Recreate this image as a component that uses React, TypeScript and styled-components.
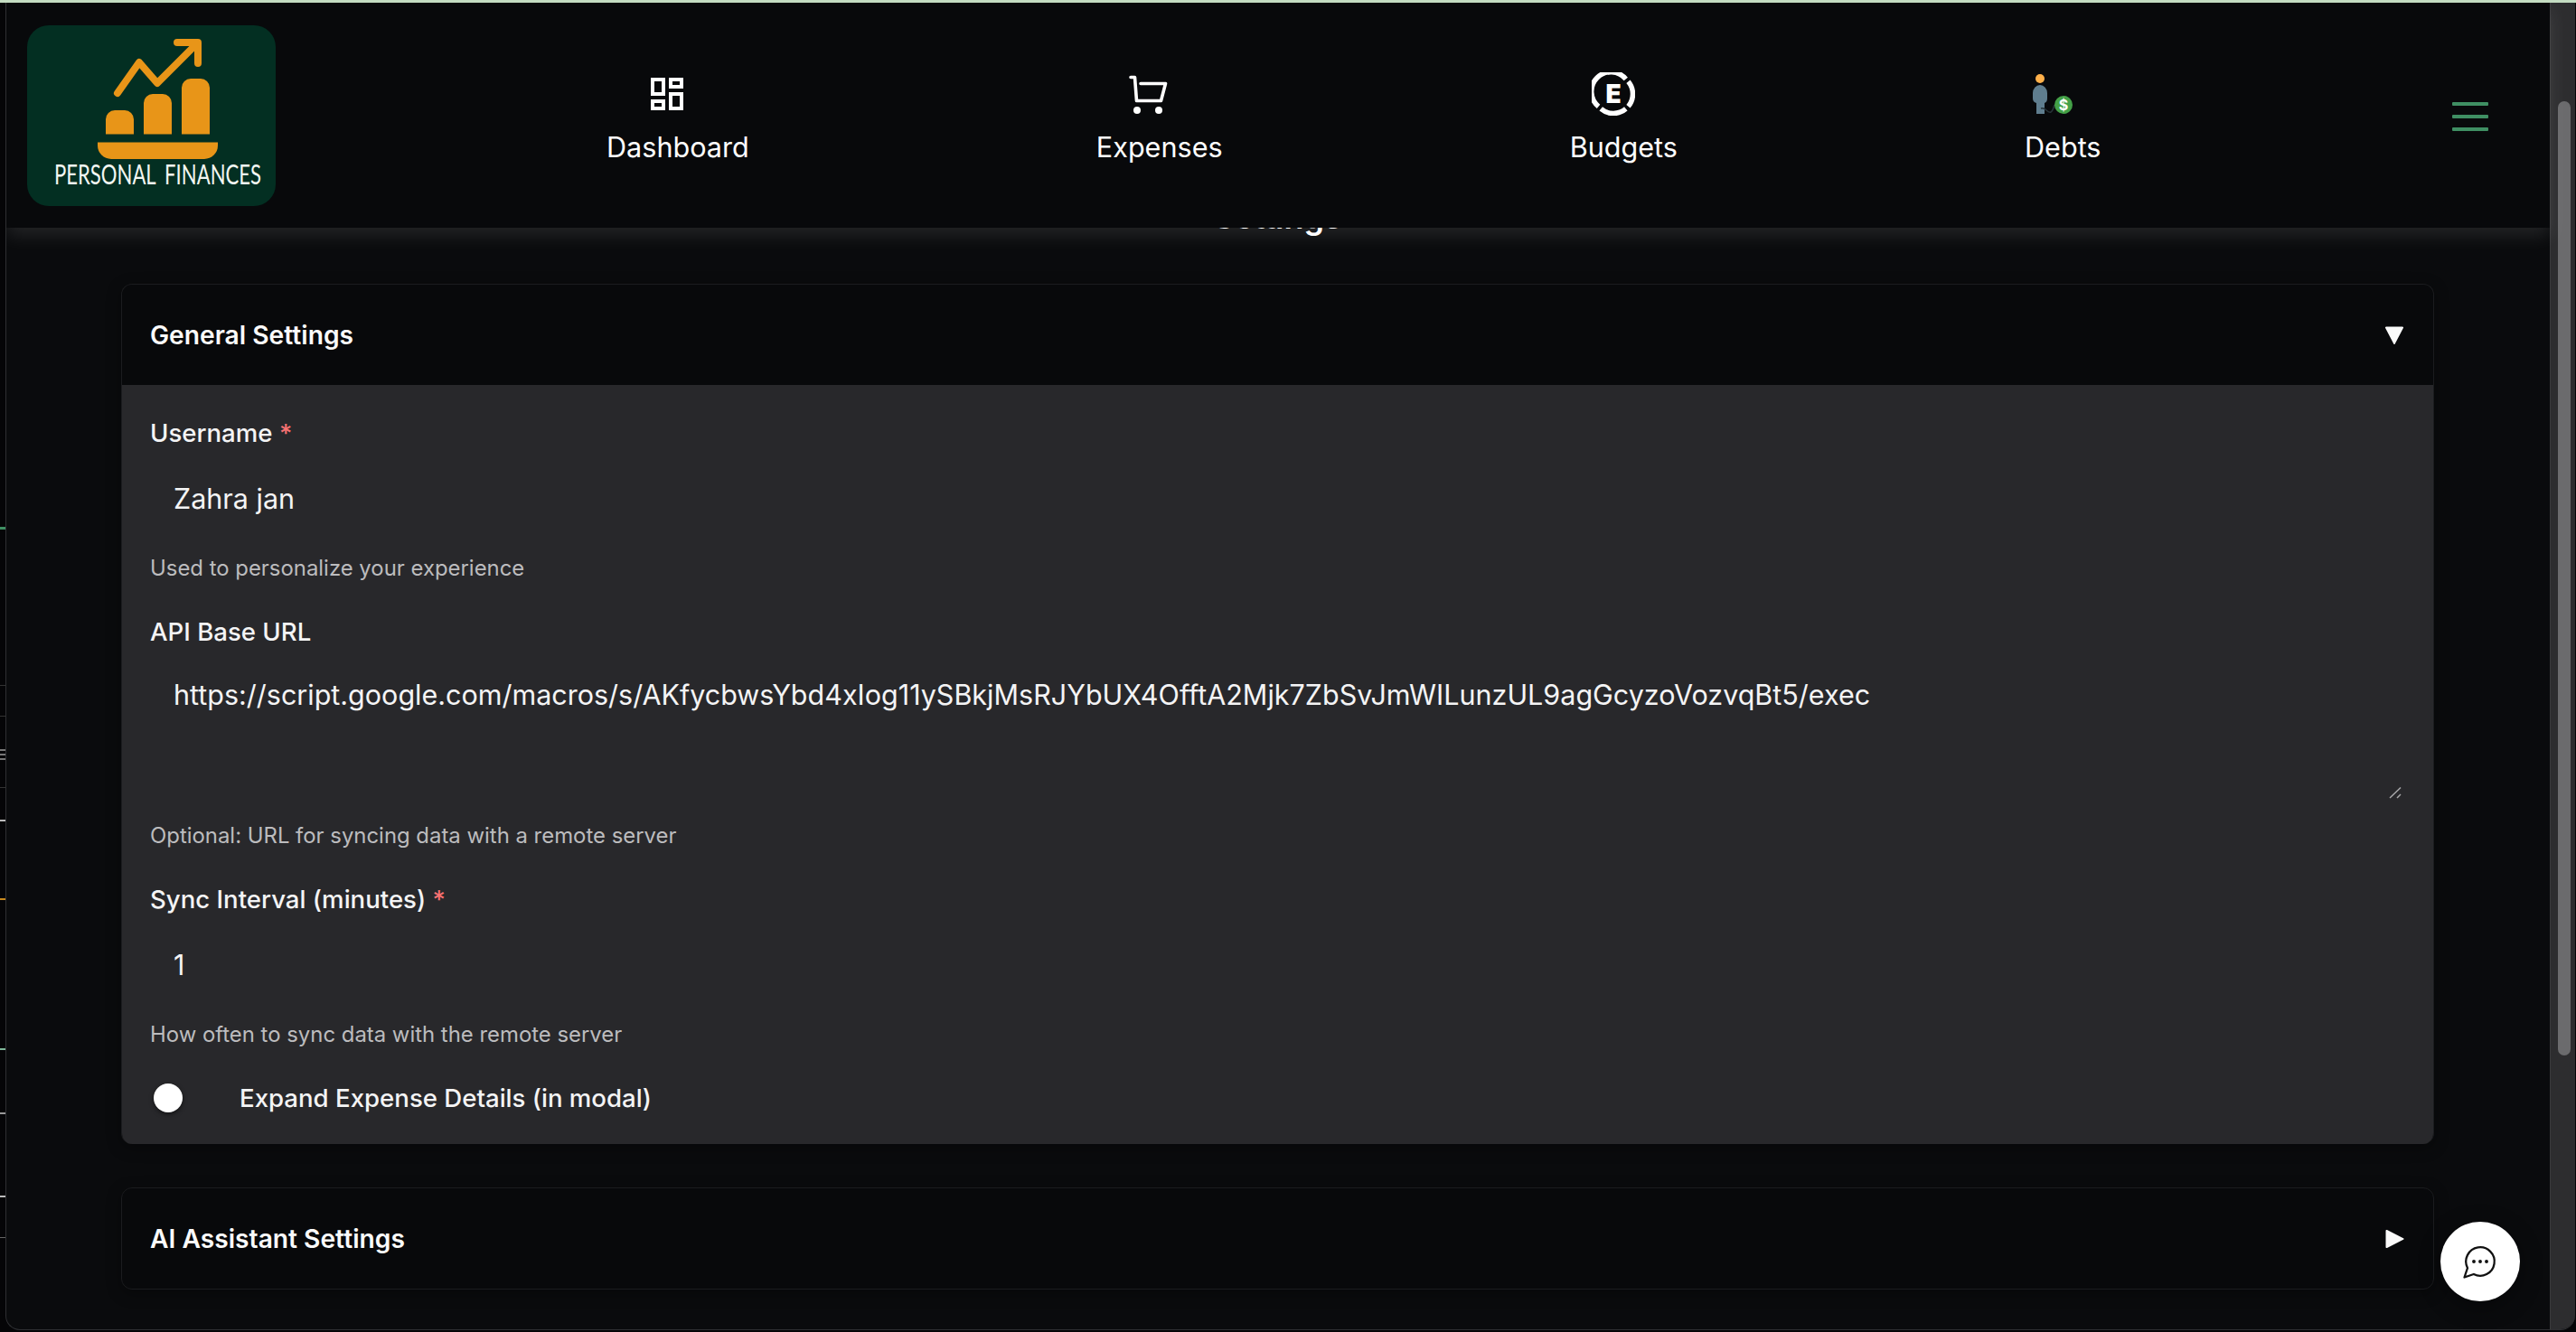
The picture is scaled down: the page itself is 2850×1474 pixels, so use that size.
import React from "react";
import styled, { createGlobalStyle } from "styled-components";

const Global = createGlobalStyle`
  html, body { margin: 0; padding: 0; background: #050507; overflow: hidden; }
  * { box-sizing: border-box; }
  body { font-family: Inter, "Liberation Sans", sans-serif; color: #fff; }
`;

const Screen = styled.div`
  width: 2850px;
  height: 1474px;
  display: flex;
  flex-direction: column;
  background: #050507;
`;
const TopStrip = styled.div`
  height: 3px;
  flex: none;
  background: #c4dcc2;
`;
const Desk = styled.div`
  flex: 1;
  min-height: 0;
  display: flex;
  padding: 0 1px 2px 0;
`;
const BackStrip = styled.svg`
  width: 6px;
  height: 100%;
  flex: none;
  display: block;
`;
const Window = styled.div`
  flex: 1;
  min-width: 0;
  display: flex;
  overflow: hidden;
  border: 1px solid #2e2f32;
  border-top: none;
  border-right: none;
  border-radius: 0 0 16px 16px;
  background: #0a0b0d;
`;
const Page = styled.div`
  flex: 1;
  min-width: 0;
  display: flex;
  flex-direction: column;
`;
const Scrollbar = styled.div`
  width: 28px;
  flex: none;
  padding: 109px 5px 0 8px;
  background: #2d2d2f;
  border-left: 1px solid #3a3a3c;
`;
const Thumb = styled.div`
  height: 1056px;
  border-radius: 8px;
  background: #6b6b6d;
`;
const Header = styled.header`
  position: relative;
  z-index: 2;
  height: 249px;
  flex: none;
  display: flex;
  align-items: flex-start;
  padding: 25px 68px 0 23px;
  background: #08090b;
  box-shadow: 0 8px 20px rgba(255, 255, 255, 0.11);
`;
const LogoBox = styled.svg`
  width: 275px;
  height: 200px;
  flex: none;
  display: block;
`;
const Nav = styled.nav`
  display: flex;
  gap: 384px;
  margin-left: 366px;
  padding-top: 52px;
`;
const NavItem = styled.a`
  display: flex;
  flex-direction: column;
  align-items: center;
  color: #fff;
  font-size: 30.6px;
  line-height: 36px;
  white-space: nowrap;
`;
const NavIcon = styled.span`
  height: 48px;
  margin-right: 23px;
  margin-bottom: 17px;
  display: flex;
  align-items: center;
  justify-content: center;
`;
const Burger = styled.button`
  margin-left: auto;
  margin-top: 85px;
  width: 40px;
  padding: 0;
  border: 0;
  background: none;
  display: flex;
  flex-direction: column;
  gap: 10px;
`;
const BurgerBar = styled.span`
  height: 4px;
  background: #3f8f63;
  border-radius: 1px;
`;
const Main = styled.main`
  flex: 1;
  min-height: 0;
  overflow: hidden;
  padding: 0 128px 0 127px;
`;
const Title = styled.h1`
  margin: -34px 0 27px;
  height: 69px;
  text-align: center;
  font-size: 36px;
  line-height: 44px;
  font-weight: 600;
  color: #fff;
`;
const Card = styled.section<{ $open?: boolean }>`
  margin-bottom: 48px;
  border-radius: 12px;
  overflow: hidden;
  border: 1px solid #1b1c1f;
  border-bottom: ${(p) => (p.$open ? "none" : "1px solid #1b1c1f")};
  background: #08090b;
  box-shadow: 0 4px 16px rgba(0, 0, 0, 0.35);
`;
const CardHead = styled.div`
  height: 111px;
  display: flex;
  align-items: center;
  justify-content: space-between;
  padding: 0 32px 0 31px;
`;
const CardTitle = styled.h2`
  margin: 0;
  font-size: 28.2px;
  line-height: 36px;
  font-weight: 600;
  color: #fafafa;
`;
const CardBody = styled.div`
  padding: 35px 32px 33px 31px;
  background: #28282b;
  display: flex;
  flex-direction: column;
  gap: 36px;
`;
const Field = styled.div`
  display: flex;
  flex-direction: column;
`;
const Label = styled.label`
  height: 36px;
  margin-bottom: 16px;
  font-size: 27.6px;
  line-height: 36px;
  font-weight: 500;
  color: #f4f4f5;
`;
const Required = styled.span`
  color: #f87171;
`;
const TextInput = styled.input`
  height: 76px;
  padding: 0 26px;
  border: 0;
  outline: 0;
  background: transparent;
  font: 400 30.5px/40px Inter, sans-serif;
  color: #f4f4f5;
`;
const TextAreaWrap = styled.div`
  position: relative;
  height: 152px;
  display: flex;
`;
const TextArea = styled.textarea`
  flex: 1;
  padding: 16px 26px;
  border: 0;
  outline: 0;
  background: transparent;
  resize: none;
  font: 400 30.5px/40px Inter, sans-serif;
  color: #f4f4f5;
`;
const ResizeGrip = styled.svg`
  position: absolute;
  right: 3px;
  bottom: 1px;
  display: block;
`;
const Help = styled.div`
  height: 33px;
  margin-top: 23px;
  font-size: 23.9px;
  line-height: 33px;
  color: #bcbcbe;
`;
const ToggleRow = styled.div`
  height: 36px;
  display: flex;
  align-items: center;
`;
const Knob = styled.span`
  width: 32px;
  height: 32px;
  margin-left: 4px;
  margin-right: 63px;
  border-radius: 50%;
  background: #fff;
  box-shadow: 0 2px 5px rgba(0, 0, 0, 0.55);
`;
const ToggleText = styled.span`
  font-size: 27.6px;
  line-height: 36px;
  font-weight: 500;
  color: #f4f4f5;
`;
const ChatButton = styled.button`
  position: absolute;
  left: 2700px;
  top: 1352px;
  z-index: 3;
  width: 88px;
  height: 88px;
  padding: 0;
  border: 0;
  border-radius: 50%;
  background: #fff;
  display: flex;
  align-items: center;
  justify-content: center;
  box-shadow: 0 6px 24px rgba(0, 0, 0, 0.4);
`;

const DashIcon = () => (
  <svg width="48" height="48" viewBox="0 0 24 24" fill="#fff">
    <path d="M19 5v2h-4V5h4M9 5v6H5V5h4m10 8v6h-4v-6h4M9 17v2H5v-2h4M21 3h-8v6h8V3zM11 3H3v10h8V3zm10 8h-8v10h8V11zm-10 4H3v6h8v-6z" />
  </svg>
);
const CartIcon = () => (
  <svg width="48" height="48" viewBox="18 10 48 48" fill="none">
    <path d="M22 15.500h4.500L28.500 41.500H55.500L60.500 22.500H33" stroke="#fff" strokeWidth="3.600" strokeLinejoin="round" strokeLinecap="round" />
    <circle cx="29" cy="52" r="4" fill="#fff" />
    <circle cx="53" cy="52" r="4" fill="#fff" />
  </svg>
);
const BudgetIcon = () => (
  <svg width="48" height="48" viewBox="0 0 48 48" fill="none">
    <g stroke="#fff" strokeWidth="5.500">
      <path d="M7.530 37.800A21.500 21.500 0 1 1 37.800 7.530" />
      <path d="M40.470 10.200A21.500 21.500 0 0 1 40.470 37.800" />
      <path d="M37.800 40.470A21.500 21.500 0 0 1 10.200 40.470" />
    </g>
    <text x="24" y="34" textAnchor="middle" fontFamily="Inter, sans-serif" fontWeight="900" fontSize="28" fill="#fff">E</text>
  </svg>
);
const DebtIcon = () => (
  <svg width="48" height="48" viewBox="16 10 48 48" fill="none">
    <circle cx="26" cy="17" r="5" fill="#ffb04a" />
    <path d="M18 33a8 9 0 0 1 16 0v6q0 4-3 5v12h-9V44q-4-1-4-5z" fill="#5f7d8e" />
    <path d="M27 50q3-1 6 2t5 2 4-8" stroke="#263238" strokeWidth="1.600" />
    <circle cx="52" cy="46" r="10" fill="#43a047" />
    <text x="52" y="52" textAnchor="middle" fontFamily="Inter, sans-serif" fontWeight="700" fontSize="16" fill="#fff">$</text>
  </svg>
);
const DownArrow = () => (
  <svg width="22" height="22" viewBox="0 0 22 22" fill="#fafafa">
    <path d="M2 1.500h18a1 1 0 0 1 .9 1.500L12 20a1 1 0 0 1-2 0L1.100 3A1 1 0 0 1 2 1.500z" />
  </svg>
);
const RightArrow = () => (
  <svg width="22" height="22" viewBox="0 0 22 22" fill="#fafafa">
    <path d="M1.500 2v18a1 1 0 0 0 1.500.9L20.500 12a1 1 0 0 0 0-2L3 1.100A1 1 0 0 0 1.500 2z" />
  </svg>
);
const ChatIcon = () => (
  <svg width="42" height="42" viewBox="0 0 24 24" fill="none" stroke="#111" strokeWidth="1.300" strokeLinejoin="round">
    <path d="M7.900 20A9 9 0 1 0 4 16.100L2 22Z" />
    <circle cx="8" cy="12" r="1.100" fill="#111" stroke="none" />
    <circle cx="12" cy="12" r="1.100" fill="#111" stroke="none" />
    <circle cx="16" cy="12" r="1.100" fill="#111" stroke="none" />
  </svg>
);

const ticks: [number, string, number][] = [
  [580, "#3f8f63", 3],
  [755, "#333", 1],
  [789, "#333", 1],
  [826, "#777", 2],
  [831, "#777", 2],
  [836, "#777", 2],
  [868, "#333", 1],
  [904, "#bbb", 2],
  [991, "#c88a1e", 2],
  [1157, "#7fb89a", 2],
  [1228, "#999", 2],
  [1320, "#bbb", 2],
  [1366, "#666", 1],
];

export default function App() {
  return (
    <Screen>
      <Global />
      <TopStrip />
      <Desk>
        <BackStrip viewBox="0 0 6 1469" preserveAspectRatio="none">
          {ticks.map(([y, c, h]) => (
            <rect key={y} x="0" y={y} width="6" height={h} fill={c} />
          ))}
        </BackStrip>
        <Window>
          <Page>
            <Header>
              <LogoBox viewBox="0 0 275 200">
                <rect width="275" height="200" rx="24" fill="#032f22" />
                <path d="M100 75 124 41 144 64 188 20M166 19H189V42" fill="none" stroke="#e89518" strokeWidth="8" strokeLinecap="round" strokeLinejoin="round" />
                <path d="M87 120.500V104a10 10 0 0 1 10-10h11a10 10 0 0 1 10 10v16.500zM129 120.500V86a10 10 0 0 1 10-10h11a10 10 0 0 1 10 10v34.500zM171 120.500V69a10 10 0 0 1 10-10h11a10 10 0 0 1 10 10v51.500z" fill="#e89518" />
                <path d="M78 129.500H211V133a15 15 0 0 1-15 15H93a15 15 0 0 1-15-15z" fill="#e89518" />
                <text x="30" y="176" textLength="229" lengthAdjust="spacingAndGlyphs" fontFamily="Lato, sans-serif" fontSize="30" fill="#f3f7f2" wordSpacing="6">PERSONAL FINANCES</text>
              </LogoBox>
              <Nav>
                <NavItem>
                  <NavIcon><DashIcon /></NavIcon>
                  Dashboard
                </NavItem>
                <NavItem>
                  <NavIcon><CartIcon /></NavIcon>
                  Expenses
                </NavItem>
                <NavItem>
                  <NavIcon><BudgetIcon /></NavIcon>
                  Budgets
                </NavItem>
                <NavItem>
                  <NavIcon><DebtIcon /></NavIcon>
                  Debts
                </NavItem>
              </Nav>
              <Burger aria-label="menu">
                <BurgerBar />
                <BurgerBar />
                <BurgerBar />
              </Burger>
            </Header>
            <Main>
              <Title>Settings</Title>
              <Card $open>
                <CardHead>
                  <CardTitle>General Settings</CardTitle>
                  <DownArrow />
                </CardHead>
                <CardBody>
                  <Field>
                    <Label>Username <Required>*</Required></Label>
                    <TextInput defaultValue="Zahra jan" />
                    <Help>Used to personalize your experience</Help>
                  </Field>
                  <Field>
                    <Label>API Base URL</Label>
                    <TextAreaWrap>
                      <TextArea defaultValue="https://script.google.com/macros/s/AKfycbwsYbd4xIog11ySBkjMsRJYbUX4OfftA2Mjk7ZbSvJmWILunzUL9agGcyzoVozvqBt5/exec" />
                      <ResizeGrip width="14" height="14" viewBox="0 0 14 14" fill="none" stroke="#a8a8aa" strokeWidth="1.500">
                        <path d="M1 13 13 1.500M9 13l4-4" />
                      </ResizeGrip>
                    </TextAreaWrap>
                    <Help>Optional: URL for syncing data with a remote server</Help>
                  </Field>
                  <Field>
                    <Label>Sync Interval (minutes) <Required>*</Required></Label>
                    <TextInput defaultValue="1" />
                    <Help>How often to sync data with the remote server</Help>
                  </Field>
                  <ToggleRow>
                    <Knob />
                    <ToggleText>Expand Expense Details (in modal)</ToggleText>
                  </ToggleRow>
                </CardBody>
              </Card>
              <Card>
                <CardHead>
                  <CardTitle>AI Assistant Settings</CardTitle>
                  <RightArrow />
                </CardHead>
              </Card>
            </Main>
          </Page>
          <Scrollbar>
            <Thumb />
          </Scrollbar>
        </Window>
      </Desk>
      <ChatButton aria-label="chat">
        <ChatIcon />
      </ChatButton>
    </Screen>
  );
}
